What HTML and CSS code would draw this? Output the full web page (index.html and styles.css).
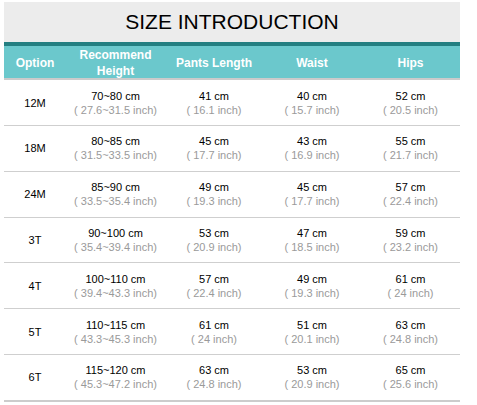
FILE: index.html
```html
<!DOCTYPE html>
<html>
<head>
<meta charset="utf-8">
<link rel="stylesheet" href="styles.css">
</head>
<body>
<div class="chart">
  <div class="title">SIZE INTRODUCTION</div>
  <div class="band"></div>
  <div class="row head">
    <div class="cell">Option</div>
    <div class="cell">Recommend<br>Height</div>
    <div class="cell">Pants Length</div>
    <div class="cell">Waist</div>
    <div class="cell">Hips</div>
  </div>
  <div class="row">
    <div class="cell opt">12M</div>
    <div class="cell"><span class="cm">70~80 cm</span><span class="in">( 27.6~31.5 inch)</span></div>
    <div class="cell"><span class="cm">41 cm</span><span class="in">( 16.1 inch)</span></div>
    <div class="cell"><span class="cm">40 cm</span><span class="in">( 15.7 inch)</span></div>
    <div class="cell"><span class="cm">52 cm</span><span class="in">( 20.5 inch)</span></div>
  </div>
  <div class="row">
    <div class="cell opt">18M</div>
    <div class="cell"><span class="cm">80~85 cm</span><span class="in">( 31.5~33.5 inch)</span></div>
    <div class="cell"><span class="cm">45 cm</span><span class="in">( 17.7 inch)</span></div>
    <div class="cell"><span class="cm">43 cm</span><span class="in">( 16.9 inch)</span></div>
    <div class="cell"><span class="cm">55 cm</span><span class="in">( 21.7 inch)</span></div>
  </div>
  <div class="row">
    <div class="cell opt">24M</div>
    <div class="cell"><span class="cm">85~90 cm</span><span class="in">( 33.5~35.4 inch)</span></div>
    <div class="cell"><span class="cm">49 cm</span><span class="in">( 19.3 inch)</span></div>
    <div class="cell"><span class="cm">45 cm</span><span class="in">( 17.7 inch)</span></div>
    <div class="cell"><span class="cm">57 cm</span><span class="in">( 22.4 inch)</span></div>
  </div>
  <div class="row">
    <div class="cell opt">3T</div>
    <div class="cell"><span class="cm">90~100 cm</span><span class="in">( 35.4~39.4 inch)</span></div>
    <div class="cell"><span class="cm">53 cm</span><span class="in">( 20.9 inch)</span></div>
    <div class="cell"><span class="cm">47 cm</span><span class="in">( 18.5 inch)</span></div>
    <div class="cell"><span class="cm">59 cm</span><span class="in">( 23.2 inch)</span></div>
  </div>
  <div class="row">
    <div class="cell opt">4T</div>
    <div class="cell"><span class="cm">100~110 cm</span><span class="in">( 39.4~43.3 inch)</span></div>
    <div class="cell"><span class="cm">57 cm</span><span class="in">( 22.4 inch)</span></div>
    <div class="cell"><span class="cm">49 cm</span><span class="in">( 19.3 inch)</span></div>
    <div class="cell"><span class="cm">61 cm</span><span class="in">( 24 inch)</span></div>
  </div>
  <div class="row">
    <div class="cell opt">5T</div>
    <div class="cell"><span class="cm">110~115 cm</span><span class="in">( 43.3~45.3 inch)</span></div>
    <div class="cell"><span class="cm">61 cm</span><span class="in">( 24 inch)</span></div>
    <div class="cell"><span class="cm">51 cm</span><span class="in">( 20.1 inch)</span></div>
    <div class="cell"><span class="cm">63 cm</span><span class="in">( 24.8 inch)</span></div>
  </div>
  <div class="row last">
    <div class="cell opt">6T</div>
    <div class="cell"><span class="cm">115~120 cm</span><span class="in">( 45.3~47.2 inch)</span></div>
    <div class="cell"><span class="cm">63 cm</span><span class="in">( 24.8 inch)</span></div>
    <div class="cell"><span class="cm">53 cm</span><span class="in">( 20.9 inch)</span></div>
    <div class="cell"><span class="cm">65 cm</span><span class="in">( 25.6 inch)</span></div>
  </div>
</div>
</body>
</html>
```
FILE: styles.css
```css
html, body {
  margin: 0;
  padding: 0;
  background: #ffffff;
}
body {
  font-family: "Liberation Sans", Arial, sans-serif;
  color: #000;
}
.chart {
  width: 456px;
  margin: 2px 0 0 4px;
}
.title {
  height: 40px;
  line-height: 40px;
  background: #ececec;
  text-align: center;
  font-size: 21px;
  color: #000;
}
.band {
  height: 4px;
  background: #247f81;
}
.row {
  display: grid;
  grid-template-columns: 62px 99px 98px 98px 99px;
  height: 45.83px;
  box-sizing: border-box;
  border-bottom: 1px solid #cfcfcf;
}
.row:nth-child(4) {
  height: 46px;
}
.row.head {
  height: 34px;
  background: #6bc8cc;
  border-bottom: 2px solid #cbcbcb;
  color: #fff;
  font-weight: bold;
  font-size: 12px;
  line-height: 16px;
}
.row.last {
  border-bottom: 2px solid #cccccc;
  height: 46.5px;
}
.cell {
  display: flex;
  flex-direction: column;
  align-items: center;
  justify-content: center;
  text-align: center;
  font-size: 11px;
  line-height: 14px;
}
.row.head .cell {
  font-size: 12px;
  line-height: 16px;
  padding-top: 1px;
}
.cm {
  color: #000;
}
.in {
  color: #9a9a9a;
}
```
